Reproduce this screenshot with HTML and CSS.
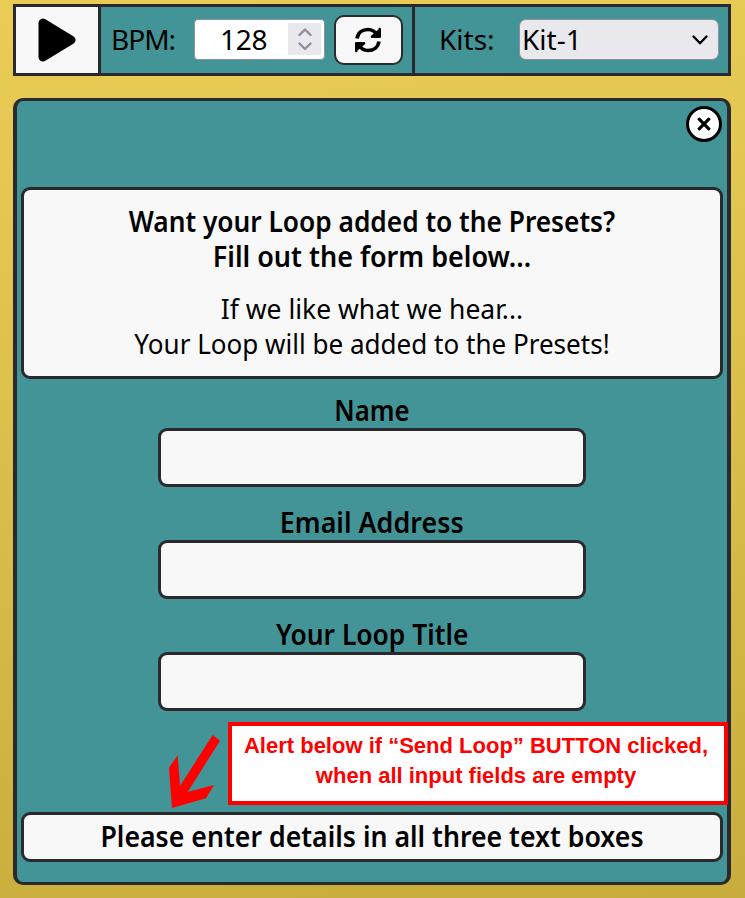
FILE: index.html
```html
<!DOCTYPE html>
<html lang="en">
<head>
<meta charset="utf-8">
<title>Send Loop</title>
<link rel="stylesheet" href="styles.css">
</head>
<body>
<header class="toolbar">
  <button class="play" aria-label="Play"><svg width="40" height="46" viewBox="0 0 40 46"><path d="M6 6V40L34 23Z" fill="#000" stroke="#000" stroke-width="9" stroke-linejoin="round"/></svg></button>
  <div class="tempo">
    <span class="label bpm-label">BPM:</span>
    <div class="number"><span class="number-value">128</span>
      <span class="spinner"><svg width="14" height="24" viewBox="0 0 14 24" fill="none" stroke="#8f8f9d" stroke-width="2.400" stroke-linecap="round" stroke-linejoin="round"><path d="M1.500 8 7 2.500l5.500 5.500M1.500 16.500 7 22l5.500-5.500"/></svg></span>
    </div>
    <button class="reset" aria-label="Reset"><svg width="28" height="26" viewBox="0 0 28 26" fill="none" stroke="#000" stroke-width="3.600"><path d="M3 11.500C4 5.500 8.500 2.500 14 2.500C18.500 2.500 21.500 5 24 8.500M25 14.500C24 20.500 19.500 23.500 14 23.500C9.500 23.500 6.500 21 4 17.500"/><path d="M25.700 2V9.700H18L25.700 3M2.300 24V16.300H10L2.300 23" fill="#000" stroke-linecap="round" stroke-linejoin="round" stroke-width="2.600"/></svg></button>
  </div>
  <div class="kits">
    <span class="label">Kits:</span>
    <div class="select"><span class="select-value">Kit-1</span><svg width="16" height="10" viewBox="0 0 16 10" fill="none" stroke="#000" stroke-width="2.300" stroke-linecap="round" stroke-linejoin="round"><path d="M1.500 1.500 8 8.300l6.500-6.800"/></svg></div>
  </div>
</header>
<main class="panel">
  <button class="close" aria-label="Close"><svg width="14" height="14" viewBox="0 0 14 14" stroke="#000" stroke-width="3.200" stroke-linecap="round"><path d="M2.200 2.200 11.800 11.800M11.800 2.200 2.200 11.800"/></svg></button>
  <section class="intro">
    <h2><span class="line l1">Want your Loop added to the Presets?</span><span class="line l2">Fill out the form below...</span></h2>
    <p><span class="line l3">If we like what we hear...</span><span class="line l4">Your Loop will be added to the Presets!</span></p>
  </section>
  <form class="form">
    <label for="name"><span class="line l5">Name</span></label><input id="name" type="text">
    <label for="email"><span class="line l6">Email Address</span></label><input id="email" type="text">
    <label for="title"><span class="line l7">Your Loop Title</span></label><input id="title" type="text">
  </form>
  <div class="alert"><span class="line l8">Please enter details in all three text boxes</span></div>
  <svg class="arrow" width="51" height="73" viewBox="0 0 51 73"><path d="M43.700 0 51 5.700 18.700 57 45 50 37 63.300 3 73 0 32.700 8.700 20.300 11 51Z" fill="red"/></svg>
  <aside class="callout">Alert below if “Send Loop” BUTTON clicked,<br>when all input fields are empty</aside>
</main>
</body>
</html>
```
FILE: styles.css
```css
* { box-sizing: border-box; }
html { height: 100%; }
body {
  margin: 0;
  padding: 4px 14px 0 13px;
  height: 898px;
  overflow: hidden;
  background: linear-gradient(175deg, #e8cc55 0%, #e6c954 15%, #c9ad3c 100%);
  font-family: "Noto Sans", "Open Sans", sans-serif;
  font-size: 28px;
  color: #000;
}
button { padding: 0; }
svg { display: block; flex: none; }
.toolbar {
  display: flex;
  height: 72px;
  border: 3px solid #2a2a2e;
  background: #439496;
}
.play {
  display: flex;
  align-items: center;
  justify-content: center;
  width: 85px;
  border: 0;
  border-right: 3px solid #2a2a2e;
  background: #f8f8f8;
}
.tempo {
  display: flex;
  align-items: center;
  width: 314px;
  padding-left: 10px;
  border-right: 3px solid #2a2a2e;
}
.label { line-height: 40px; padding-bottom: 2px; }
.bpm-label { width: 83px; letter-spacing: -1px; }
.number {
  display: flex;
  align-items: center;
  width: 131px;
  height: 41px;
  margin-bottom: 2px;
  padding: 0 3px 0 25px;
  border: 1px solid #8f8f9d;
  border-radius: 4px;
  background: #fff;
}
.number-value { flex: 1; line-height: 39px; letter-spacing: -0.3px; }
.spinner {
  display: flex;
  align-items: center;
  justify-content: center;
  width: 33px;
  height: 32px;
  background: #e9e9ed;
}
.reset {
  display: flex;
  align-items: center;
  justify-content: center;
  width: 69px;
  height: 50px;
  margin-left: 9px;
  padding-right: 2px;
  border: 2px solid #2a2a2e;
  border-radius: 10px;
  background: #f8f8f8;
}
.kits {
  flex: 1;
  display: flex;
  align-items: center;
  justify-content: space-between;
  padding: 0 9px 0 24px;
}
.select {
  display: flex;
  align-items: center;
  justify-content: space-between;
  width: 200px;
  height: 41px;
  margin-bottom: 2px;
  padding: 0 10px 0 2px;
  border: 1px solid #8f8f9d;
  border-radius: 7px;
  background: #e9e9ed;
}
.select svg { margin-top: 2px; }
.select-value { line-height: 39px; }
.panel {
  position: relative;
  height: 787px;
  margin-top: 22px;
  padding: 86px 4px 0;
  border: solid #2a2a2e;
  border-width: 3px 4px;
  border-radius: 10px;
  background: #439496;
}
.close {
  position: absolute;
  top: 5px;
  right: 5px;
  display: flex;
  align-items: center;
  justify-content: center;
  width: 36px;
  height: 36px;
  border: 3px solid #000;
  border-radius: 50%;
  background: #fff;
}
.intro, .alert, .form input {
  border: 3px solid #2a2a2e;
  border-radius: 9px;
  background: #f8f8f8;
}
.intro {
  height: 192px;
  padding-top: 14px;
  text-align: center;
}
.intro h2, .intro p {
  margin: 0 0 17px;
  font-size: 28px;
  line-height: 35px;
}
.intro h2, .form label, .alert { font-weight: 600; }
.line { display: block; white-space: nowrap; }
.l1 { transform: scaleX(0.938); }
.l2 { transform: scaleX(0.963); }
.l3 { transform: scaleX(0.945); }
.l4 { transform: scaleX(0.93); }
.l5 { transform: scaleX(0.92); }
.l6 { transform: scaleX(0.96); }
.l7 { transform: scaleX(0.942); }
.l8 { transform: scaleX(0.953); }
.form {
  display: flex;
  flex-direction: column;
  align-items: center;
  padding-top: 14px;
}
.form label { line-height: 35px; }
.form input {
  width: 428px;
  height: 59px;
  margin-bottom: 18px;
  padding: 0 10px;
  font: inherit;
}
.alert {
  height: 50px;
  margin-top: 83px;
  line-height: 43px;
  text-align: center;
}
.arrow { position: absolute; left: 152px; top: 634px; }
.callout {
  position: absolute;
  left: 211px;
  top: 621px;
  width: 500px;
  height: 83px;
  padding: 5px 4px 0 0;
  border: 4px solid red;
  background: #fff;
  color: red;
  font: bold 22px/30px "Liberation Sans", Arial, sans-serif;
  text-align: center;
  white-space: nowrap;
}
```
